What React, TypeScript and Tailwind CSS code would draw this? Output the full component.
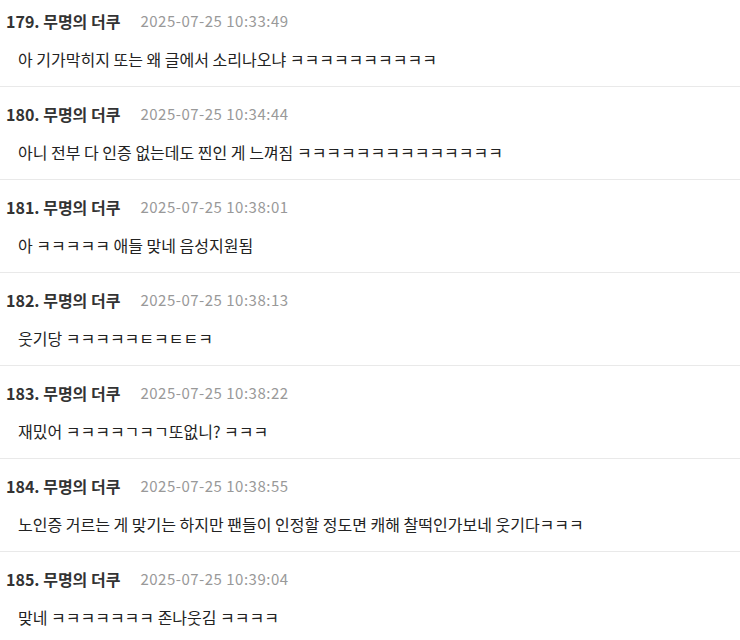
import React from "react";

const items = [
  { n: 179, t: "2025-07-25 10:33:49", b: "아 기가막히지 또는 왜 글에서 소리나오냐 ㅋㅋㅋㅋㅋㅋㅋㅋㅋㅋ" },
  { n: 180, t: "2025-07-25 10:34:44", b: "아니 전부 다 인증 없는데도 찐인 게 느껴짐 ㅋㅋㅋㅋㅋㅋㅋㅋㅋㅋㅋㅋㅋㅋ" },
  { n: 181, t: "2025-07-25 10:38:01", b: "아 ㅋㅋㅋㅋㅋ 애들 맞네 음성지원됨" },
  { n: 182, t: "2025-07-25 10:38:13", b: "웃기당 ㅋㅋㅋㅋㅋㅌㅋㅌㅌㅋ" },
  { n: 183, t: "2025-07-25 10:38:22", b: "재밌어 ㅋㅋㅋㅋㄱㅋㄱ또없니? ㅋㅋㅋ" },
  { n: 184, t: "2025-07-25 10:38:55", b: "노인증 거르는 게 맞기는 하지만 팬들이 인정할 정도면 캐해 찰떡인가보네 웃기다ㅋㅋㅋ" },
  { n: 185, t: "2025-07-25 10:39:04", b: "맞네 ㅋㅋㅋㅋㅋㅋㅋ 존나웃김 ㅋㅋㅋㅋ" },
];

export default function App() {
  return (
    <div
      className="w-[740px] h-[640px] overflow-hidden bg-white"
      style={{ fontFamily: '"Noto Sans CJK KR", "Noto Sans", sans-serif' }}
    >
      <div className="mt-[-6px]">
        {items.map((it) => (
          <div key={it.n} className="border-b border-[#e9e9e9] pt-[15px] pb-[15px]">
            <div className="flex items-center h-6 pl-[6px]">
              <span className="text-[16px] font-bold text-[#333]">
                {it.n}. 무명의 더쿠
              </span>
              <span className="ml-[20px] text-[15px] tracking-[0.5px] text-[#999]">{it.t}</span>
            </div>
            <div className="mt-[14px] h-6 flex items-center pl-[18px] text-[16px] text-[#222]">
              {it.b}
            </div>
          </div>
        ))}
      </div>
    </div>
  );
}
